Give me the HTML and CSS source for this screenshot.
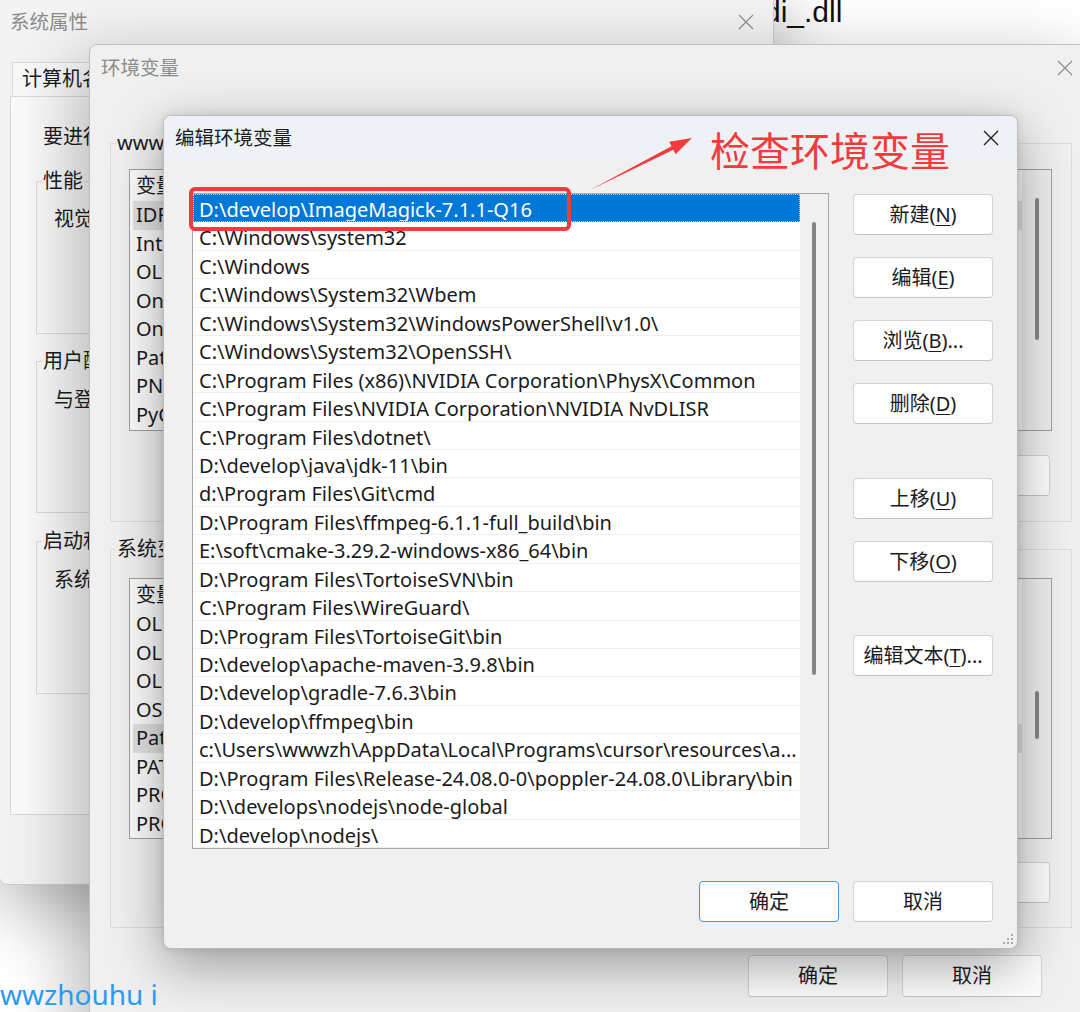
FILE: index.html
```html
<!DOCTYPE html>
<html lang="zh-CN">
<head>
<meta charset="utf-8">
<title>编辑环境变量</title>
<link rel="stylesheet" href="styles.css">
</head>
<body>
<div class="bgtext">di_.dll</div>

<section class="win win1">
  <header class="tbar tbar1">
    <span class="ttl">系统属性</span>
    <svg class="x x1" viewBox="0 0 16 16"><path d="M1 1L15 15M15 1L1 15"/></svg>
  </header>
  <div class="w1body">
    <div class="tabs">
      <span class="tab">计算机名</span><span class="tab">硬件</span><span class="tab on">高级</span><span class="tab">系统保护</span><span class="tab">远程</span>
    </div>
    <div class="panel">
      <p class="intro">要进行大多数更改，你必须作为管理员登录。</p>
      <div class="grp g1">
        <span class="glabel">性能</span>
        <p class="gtext">视觉效果，处理器计划，内存使用，以及虚拟内存</p>
      </div>
      <div class="grp g2">
        <span class="glabel">用户配置文件</span>
        <p class="gtext">与登录帐户相关的桌面设置</p>
      </div>
      <div class="grp g3">
        <span class="glabel">启动和故障恢复</span>
        <p class="gtext">系统启动、系统故障和调试信息</p>
      </div>
    </div>
  </div>
</section>

<section class="win win2">
  <header class="tbar tbar2">
    <span class="ttl">环境变量</span>
    <svg class="x x2" viewBox="0 0 16 16"><path d="M1 1L15 15M15 1L1 15"/></svg>
  </header>
  <div class="w2body">
    <div class="grp ug">
      <span class="glabel gl2">wwwzhouhui 的用户变量(<u>U</u>)</span>
      <div class="vlist">
        <div class="vcols">
          <div class="vhead"><span class="c1">变量</span></div>
          <div class="vrow sel"><span class="c1">IDF_TOOLS_PATH</span></div>
          <div class="vrow"><span class="c1">IntelliJ IDEA</span></div>
          <div class="vrow"><span class="c1">OLLAMA_MODELS</span></div>
          <div class="vrow"><span class="c1">OneDrive</span></div>
          <div class="vrow"><span class="c1">OneDriveConsumer</span></div>
          <div class="vrow"><span class="c1">Path</span></div>
          <div class="vrow"><span class="c1">PNPM_HOME</span></div>
          <div class="vrow"><span class="c1">PyCharm</span></div>
        </div>
        <div class="vscroll"><div class="vthumb"></div></div>
      </div>
      <div class="vbtns">
        <button class="btn">删除(<u>D</u>)</button>
      </div>
    </div>
    <div class="grp sg">
      <span class="glabel gl2">系统变量(<u>S</u>)</span>
      <div class="vlist">
        <div class="vcols">
          <div class="vhead"><span class="c1">变量</span></div>
          <div class="vrow"><span class="c1">OLLAMA_HOST</span></div>
          <div class="vrow"><span class="c1">OLLAMA_MODELS</span></div>
          <div class="vrow"><span class="c1">OLLAMA_ORIGINS</span></div>
          <div class="vrow"><span class="c1">OS</span></div>
          <div class="vrow sel"><span class="c1">Path</span></div>
          <div class="vrow"><span class="c1">PATHEXT</span></div>
          <div class="vrow"><span class="c1">PROCESSOR_ARCHITECTURE</span></div>
          <div class="vrow"><span class="c1">PROCESSOR_IDENTIFIER</span></div>
        </div>
        <div class="vscroll"><div class="vthumb"></div></div>
      </div>
      <div class="vbtns">
        <button class="btn">删除(<u>L</u>)</button>
      </div>
    </div>
    <div class="w2foot">
      <button class="btn big">确定</button><button class="btn big">取消</button>
    </div>
  </div>
</section>

<section class="win dlg">
  <header class="tbar tbar3">
    <span class="ttl3">编辑环境变量</span>
    <svg class="x x3" viewBox="0 0 16 16"><path d="M1 1L15 15M15 1L1 15"/></svg>
  </header>
  <div class="dbody">
    <div class="plist">
      <div class="prows">
        <div class="prow sel">D:\develop\ImageMagick-7.1.1-Q16</div>
        <div class="prow">C:\Windows\system32</div>
        <div class="prow">C:\Windows</div>
        <div class="prow">C:\Windows\System32\Wbem</div>
        <div class="prow">C:\Windows\System32\WindowsPowerShell\v1.0\</div>
        <div class="prow">C:\Windows\System32\OpenSSH\</div>
        <div class="prow">C:\Program Files (x86)\NVIDIA Corporation\PhysX\Common</div>
        <div class="prow">C:\Program Files\NVIDIA Corporation\NVIDIA NvDLISR</div>
        <div class="prow">C:\Program Files\dotnet\</div>
        <div class="prow">D:\develop\java\jdk-11\bin</div>
        <div class="prow">d:\Program Files\Git\cmd</div>
        <div class="prow">D:\Program Files\ffmpeg-6.1.1-full_build\bin</div>
        <div class="prow">E:\soft\cmake-3.29.2-windows-x86_64\bin</div>
        <div class="prow">D:\Program Files\TortoiseSVN\bin</div>
        <div class="prow">C:\Program Files\WireGuard\</div>
        <div class="prow">D:\Program Files\TortoiseGit\bin</div>
        <div class="prow">D:\develop\apache-maven-3.9.8\bin</div>
        <div class="prow">D:\develop\gradle-7.6.3\bin</div>
        <div class="prow">D:\develop\ffmpeg\bin</div>
        <div class="prow">c:\Users\wwwzh\AppData\Local\Programs\cursor\resources\a...</div>
        <div class="prow">D:\Program Files\Release-24.08.0-0\poppler-24.08.0\Library\bin</div>
        <div class="prow">D:\\develops\nodejs\node-global</div>
        <div class="prow">D:\develop\nodejs\</div>
      </div>
      <div class="ptrack"><div class="pthumb"></div></div>
    </div>
    <div class="bcol">
      <button class="btn">新建(<u>N</u>)</button>
      <button class="btn">编辑(<u>E</u>)</button>
      <button class="btn">浏览(<u>B</u>)...</button>
      <button class="btn">删除(<u>D</u>)</button>
      <button class="btn gap1">上移(<u>U</u>)</button>
      <button class="btn">下移(<u>O</u>)</button>
      <button class="btn gap2">编辑文本(<u>T</u>)...</button>
    </div>
  </div>
  <div class="dfoot">
    <button class="btn pri">确定</button><button class="btn">取消</button>
  </div>
  <svg class="grip" viewBox="0 0 12 12"><rect x="9" y="1" width="2" height="2"/><rect x="5" y="5" width="2" height="2"/><rect x="9" y="5" width="2" height="2"/><rect x="1" y="9" width="2" height="2"/><rect x="5" y="9" width="2" height="2"/><rect x="9" y="9" width="2" height="2"/></svg>
</section>

<div class="ann-box"></div>
<svg class="ann-arrow" viewBox="585 132 112 64"><polygon points="590,190 673.3,149.8 675.6,154.2 692,138 669.2,141.8 671.5,146.2"/></svg>
<div class="ann-text">检查环境变量</div>

<div class="wm">wwzhouhu i</div>
</body>
</html>
```

FILE: styles.css
```css
* { box-sizing: border-box; margin: 0; padding: 0; }
html, body { width: 1080px; height: 1012px; overflow: hidden; }
body {
  position: relative;
  background: #ffffff;
  font-family: "Noto Sans", "Noto Sans CJK SC", sans-serif;
  font-size: 20px;
  color: #1b1b1b;
  line-height: 1.3;
}
button { font: inherit; color: inherit; cursor: default; }
u { text-decoration-thickness: 1px; text-underline-offset: 3px; }

.bgtext {
  position: absolute; left: 764px; top: -3px;
  font-family: "Liberation Sans", sans-serif; font-size: 30px; line-height: 30px; color: #111;
}

.win { position: absolute; display: flex; flex-direction: column; border-radius: 8px; overflow: hidden; }
.tbar { display: flex; align-items: center; flex: none; }
.ttl { font-size: 19.5px; color: #8c8c8c; white-space: nowrap; }
.x { width: 16px; height: 16px; margin-left: auto; fill: none; stroke: #8c8c8c; stroke-width: 1.1; flex: none; }

.btn {
  width: 140px; height: 41px; flex: none;
  display: flex; align-items: center; justify-content: center;
  background: #fdfdfd; border: 1px solid #d3d3d3; border-bottom-color: #c4c4c4; border-radius: 4px;
  font-size: 20px; color: #1b1b1b; white-space: nowrap;
}
.btn.big { height: 42px; }
.btn.pri { border-color: #4a94da; }

/* group box */
.grp { border: 1px solid #dcdcdc; display: flex; flex-direction: column; flex: none; }
.glabel { align-self: flex-start; margin: -13px 0 0 5px; padding: 0 1px; line-height: 24px; background: #fbfbfb; white-space: nowrap; }
.gl2 { background: #f0f0f0; }
.gtext { margin: 14px 0 0 17px; line-height: 24px; white-space: nowrap; }

/* window 1 */
.win1 { left: -1px; top: -20px; width: 775px; height: 905px; background: #f3f3f3; border: 1px solid #cdcdcd; box-shadow: 0 22px 70px rgba(0,0,0,.3); }
.tbar1 { height: 81px; padding-left: 10px; }
.x1 { margin-right: 19px; }
.w1body { padding-left: 10px; flex: 1; display: flex; flex-direction: column; }
.tabs { display: flex; height: 34px; margin-left: 2px; flex: none; }
.tab { height: 34px; padding: 0 9px; border: 1px solid #d9d9d9; border-bottom: 0; background: #f9f9f9; line-height: 32px; white-space: nowrap; }
.tab + .tab { border-left: 0; }
.panel { height: 719px; margin-right: 10px; border: 1px solid #d9d9d9; background: #fbfbfb; padding: 0 25px; flex: none; display: flex; flex-direction: column; }
.intro { margin: 28px 0 0 7px; line-height: 24px; white-space: nowrap; }
.g1 { margin-top: 32px; height: 153px; }
.g1 .gtext { margin-top: 14px; }
.g2 { margin-top: 27px; height: 152px; }
.g2 .gtext { margin-top: 15px; }
.g3 { margin-top: 28px; height: 153px; }
.g3 .gtext { margin-top: 15px; }

/* window 2 */
.win2 { left: 89px; top: 44px; width: 1000px; height: 1000px; background: #f0f0f0; border: 1px solid #bfbfbf; box-shadow: -14px 18px 70px rgba(0,0,0,.28); }
.tbar2 { height: 45px; padding-left: 11px; }
.x2 { margin-right: 15px; }
.w2body { padding: 0 16px 0 20px; display: flex; flex-direction: column; }
.ug { margin-top: 53px; height: 379px; }
.sg { margin-top: 27px; height: 379px; }
.vlist { display: flex; border: 1px solid #a0a0a0; background: #fbfbfb; margin: 0 19px 0 18px; flex: none; }
.ug .vlist { margin-top: 14px; height: 262px; }
.sg .vlist { margin-top: 17px; height: 261px; }
.vcols { flex: 1; min-width: 0; }
.vhead { height: 31px; display: flex; align-items: center; padding-left: 6px; white-space: nowrap; }
.vrow { height: 28.5px; display: flex; align-items: center; padding-left: 3px; margin-left: 3px; white-space: nowrap; }
.vrow.sel { background: #e1e1e1; }
.c1 { width: 300px; overflow: hidden; flex: none; }
.vscroll { width: 29px; flex: none; display: flex; flex-direction: column; align-items: center; background: #eeeeee; }
.vthumb { width: 4px; border-radius: 2px; background: #868686; }
.ug .vthumb { margin-top: 28px; height: 142px; }
.sg .vthumb { margin-top: 112px; height: 48px; }
.vbtns { display: flex; justify-content: flex-end; gap: 14px; margin: 24px 21px 0 0; }
.sg .vbtns { margin-top: 23px; }
.w2foot { display: flex; justify-content: flex-end; gap: 14px; margin-top: 27px; padding-right: 30px; }

/* edit dialog */
.dlg { left: 163px; top: 115px; width: 855px; height: 834px; background: #f0f0f0; border: 1px solid #bcbcbc; box-shadow: 0 16px 54px rgba(0,0,0,.36), 0 0 10px rgba(0,0,0,.1); }
.tbar3 { height: 44px; background: #eef2f7; padding-left: 11px; }
.ttl3 { font-size: 19.5px; color: #1b1b1b; white-space: nowrap; }
.x3 { stroke: #1c1c1c; stroke-width: 1.3; margin-right: 18px; }
.dbody { display: flex; padding: 33px 0 0 28px; }
.plist { width: 637px; height: 656px; border: 1px solid #a6a6a6; background: #fff; display: flex; flex: none; }
.prows { flex: 1; min-width: 0; }
.prow { height: 28.45px; border-bottom: 1px solid #f0f0f0; padding: 4px 0 0 6px; line-height: 23.45px; white-space: nowrap; overflow: hidden; }
.prow.sel { background: #0078d7; color: #fff; border-bottom-color: #0078d7; outline: 1px dotted rgba(255,255,255,.7); outline-offset: -1px; }
.ptrack { width: 28px; background: #f0f0f0; flex: none; display: flex; flex-direction: column; align-items: center; }
.pthumb { width: 4px; height: 453px; margin-top: 28px; border-radius: 2px; background: #858585; }
.bcol { margin-left: 24px; width: 140px; display: flex; flex-direction: column; flex: none; }
.bcol .btn { margin-top: 22px; }
.bcol .btn:first-child { margin-top: 1px; }
.bcol .btn.gap1 { margin-top: 54px; }
.bcol .btn.gap2 { margin-top: 53px; }
.dfoot { display: flex; justify-content: flex-end; gap: 14px; padding: 32px 24px 0 0; }
.grip { position: absolute; right: 3px; bottom: 3px; width: 12px; height: 12px; fill: #a8a8a8; }

/* annotations */
.ann-box { position: absolute; left: 189px; top: 187px; width: 382px; height: 44px; border: 4px solid #f23b3b; border-radius: 6px; }
.ann-arrow { position: absolute; left: 585px; top: 132px; width: 112px; height: 64px; fill: #f23b3b; }
.ann-text { position: absolute; left: 710px; top: 127px; font-family: "Noto Sans CJK SC", sans-serif; font-size: 40px; line-height: 44px; color: #f23b3b; white-space: nowrap; }

.wm { position: absolute; left: 0; top: 975px; font-size: 28px; line-height: 38px; color: #2b9af3; white-space: nowrap; }
```
